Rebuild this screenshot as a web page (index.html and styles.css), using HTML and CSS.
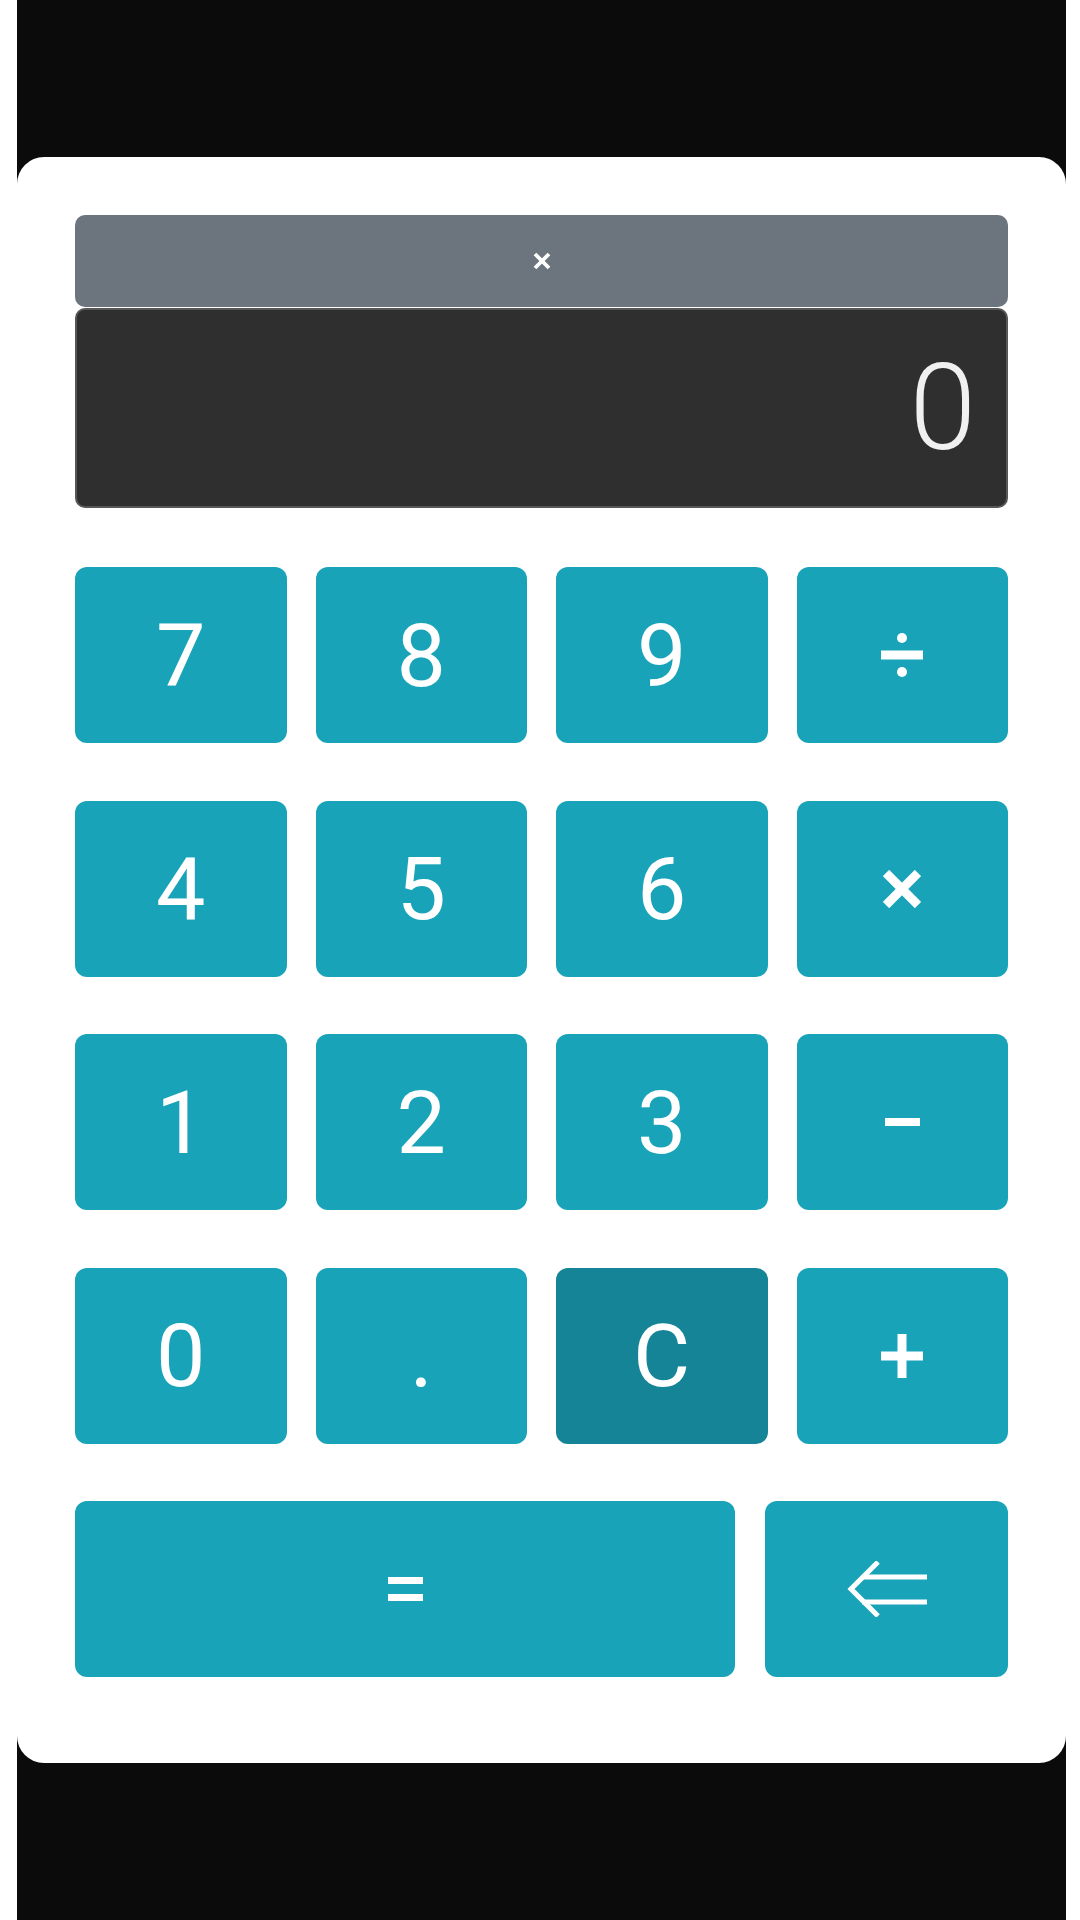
FILE: index.html
```html
<!DOCTYPE html>
<html>
<head>
<title>Calculator</title>
<link rel="stylesheet" href="styles.css">
</head>
<body>

<div class="frame">
  <div class="calc">
    <div class="op-bar">
      <svg class="op-sign" viewBox="0 0 18 18"><path d="M2 2 L16 16 M16 2 L2 16" stroke="#fff" stroke-width="3.8"/></svg>
    </div>
    <div class="screen">0</div>

    <div class="keys">
      <button class="key">7</button>
      <button class="key">8</button>
      <button class="key">9</button>
      <button class="key">
        <svg width="42" height="44" viewBox="0 0 42 44"><circle cx="21" cy="5" r="5" fill="#fff"/><rect x="0" y="17.5" width="42" height="9" fill="#fff"/><circle cx="21" cy="39" r="5" fill="#fff"/></svg>
      </button>

      <button class="key">4</button>
      <button class="key">5</button>
      <button class="key">6</button>
      <button class="key">
        <svg width="38" height="38" viewBox="0 0 38 38"><path d="M3 3 L35 35 M35 3 L3 35" stroke="#fff" stroke-width="9"/></svg>
      </button>

      <button class="key">1</button>
      <button class="key">2</button>
      <button class="key">3</button>
      <button class="key">
        <svg width="35" height="8" viewBox="0 0 35 8"><rect width="35" height="8" fill="#fff"/></svg>
      </button>

      <button class="key">0</button>
      <button class="key">.</button>
      <button class="key key-clear">C</button>
      <button class="key">
        <svg width="42" height="44" viewBox="0 0 42 44"><rect x="16.5" y="0" width="9" height="44" fill="#fff"/><rect x="0" y="17.5" width="42" height="9" fill="#fff"/></svg>
      </button>
    </div>

    <div class="keys-bottom">
      <button class="key">
        <svg width="35" height="24" viewBox="0 0 35 24"><rect y="0" width="35" height="7" fill="#fff"/><rect y="17" width="35" height="7" fill="#fff"/></svg>
      </button>
      <button class="key">
        <svg width="80" height="56" viewBox="0 0 80 56"><path d="M31 1 L4 28 L31 55" fill="none" stroke="#fff" stroke-width="5"/><path d="M15 16 H80 M15 41 H80" stroke="#fff" stroke-width="5"/></svg>
      </button>
    </div>
  </div>
</div>

</body>
</html>
```

FILE: styles.css
```css
body {
  margin: 0;
  background-color: #fff;
  font-family: Roboto, "Noto Sans", sans-serif;
}

.frame {
  width: 1049px;
  height: 1920px;
  margin-left: 17px;
  padding-top: 157px;
  box-sizing: border-box;
  background-color: #0b0b0b;
}

.calc {
  background-color: #fff;
  border-radius: 27px;
  padding: 58px 58px 86px;
}

.op-bar {
  height: 92px;
  margin-bottom: 1px;
  background-color: #6c757d;
  border-radius: 10px;
  display: flex;
  align-items: center;
  justify-content: center;
}

.op-sign {
  width: 18px;
  height: 18px;
}

.screen {
  height: 200px;
  box-sizing: border-box;
  border: 2px solid #575757;
  border-radius: 10px;
  background-color: #2f2f2f;
  color: #f0f0f0;
  font-size: 120px;
  font-weight: 300;
  display: flex;
  align-items: center;
  justify-content: flex-end;
  padding-right: 30px;
  margin-bottom: 59px;
}

.keys {
  display: grid;
  grid-template-columns: repeat(4, 1fr);
  grid-auto-rows: 176px;
  column-gap: 29px;
  row-gap: 57.5px;
}

.keys-bottom {
  display: grid;
  grid-template-columns: 660px 1fr;
  grid-auto-rows: 176px;
  column-gap: 30px;
  margin-top: 57.5px;
}

.key {
  border: none;
  border-radius: 12px;
  background-color: #19a3b8;
  color: #fff;
  font-family: Roboto, "Noto Sans", sans-serif;
  font-size: 88px;
  display: flex;
  align-items: center;
  justify-content: center;
  padding: 0;
  cursor: pointer;
}

.key-clear {
  background-color: #148496;
}
```
